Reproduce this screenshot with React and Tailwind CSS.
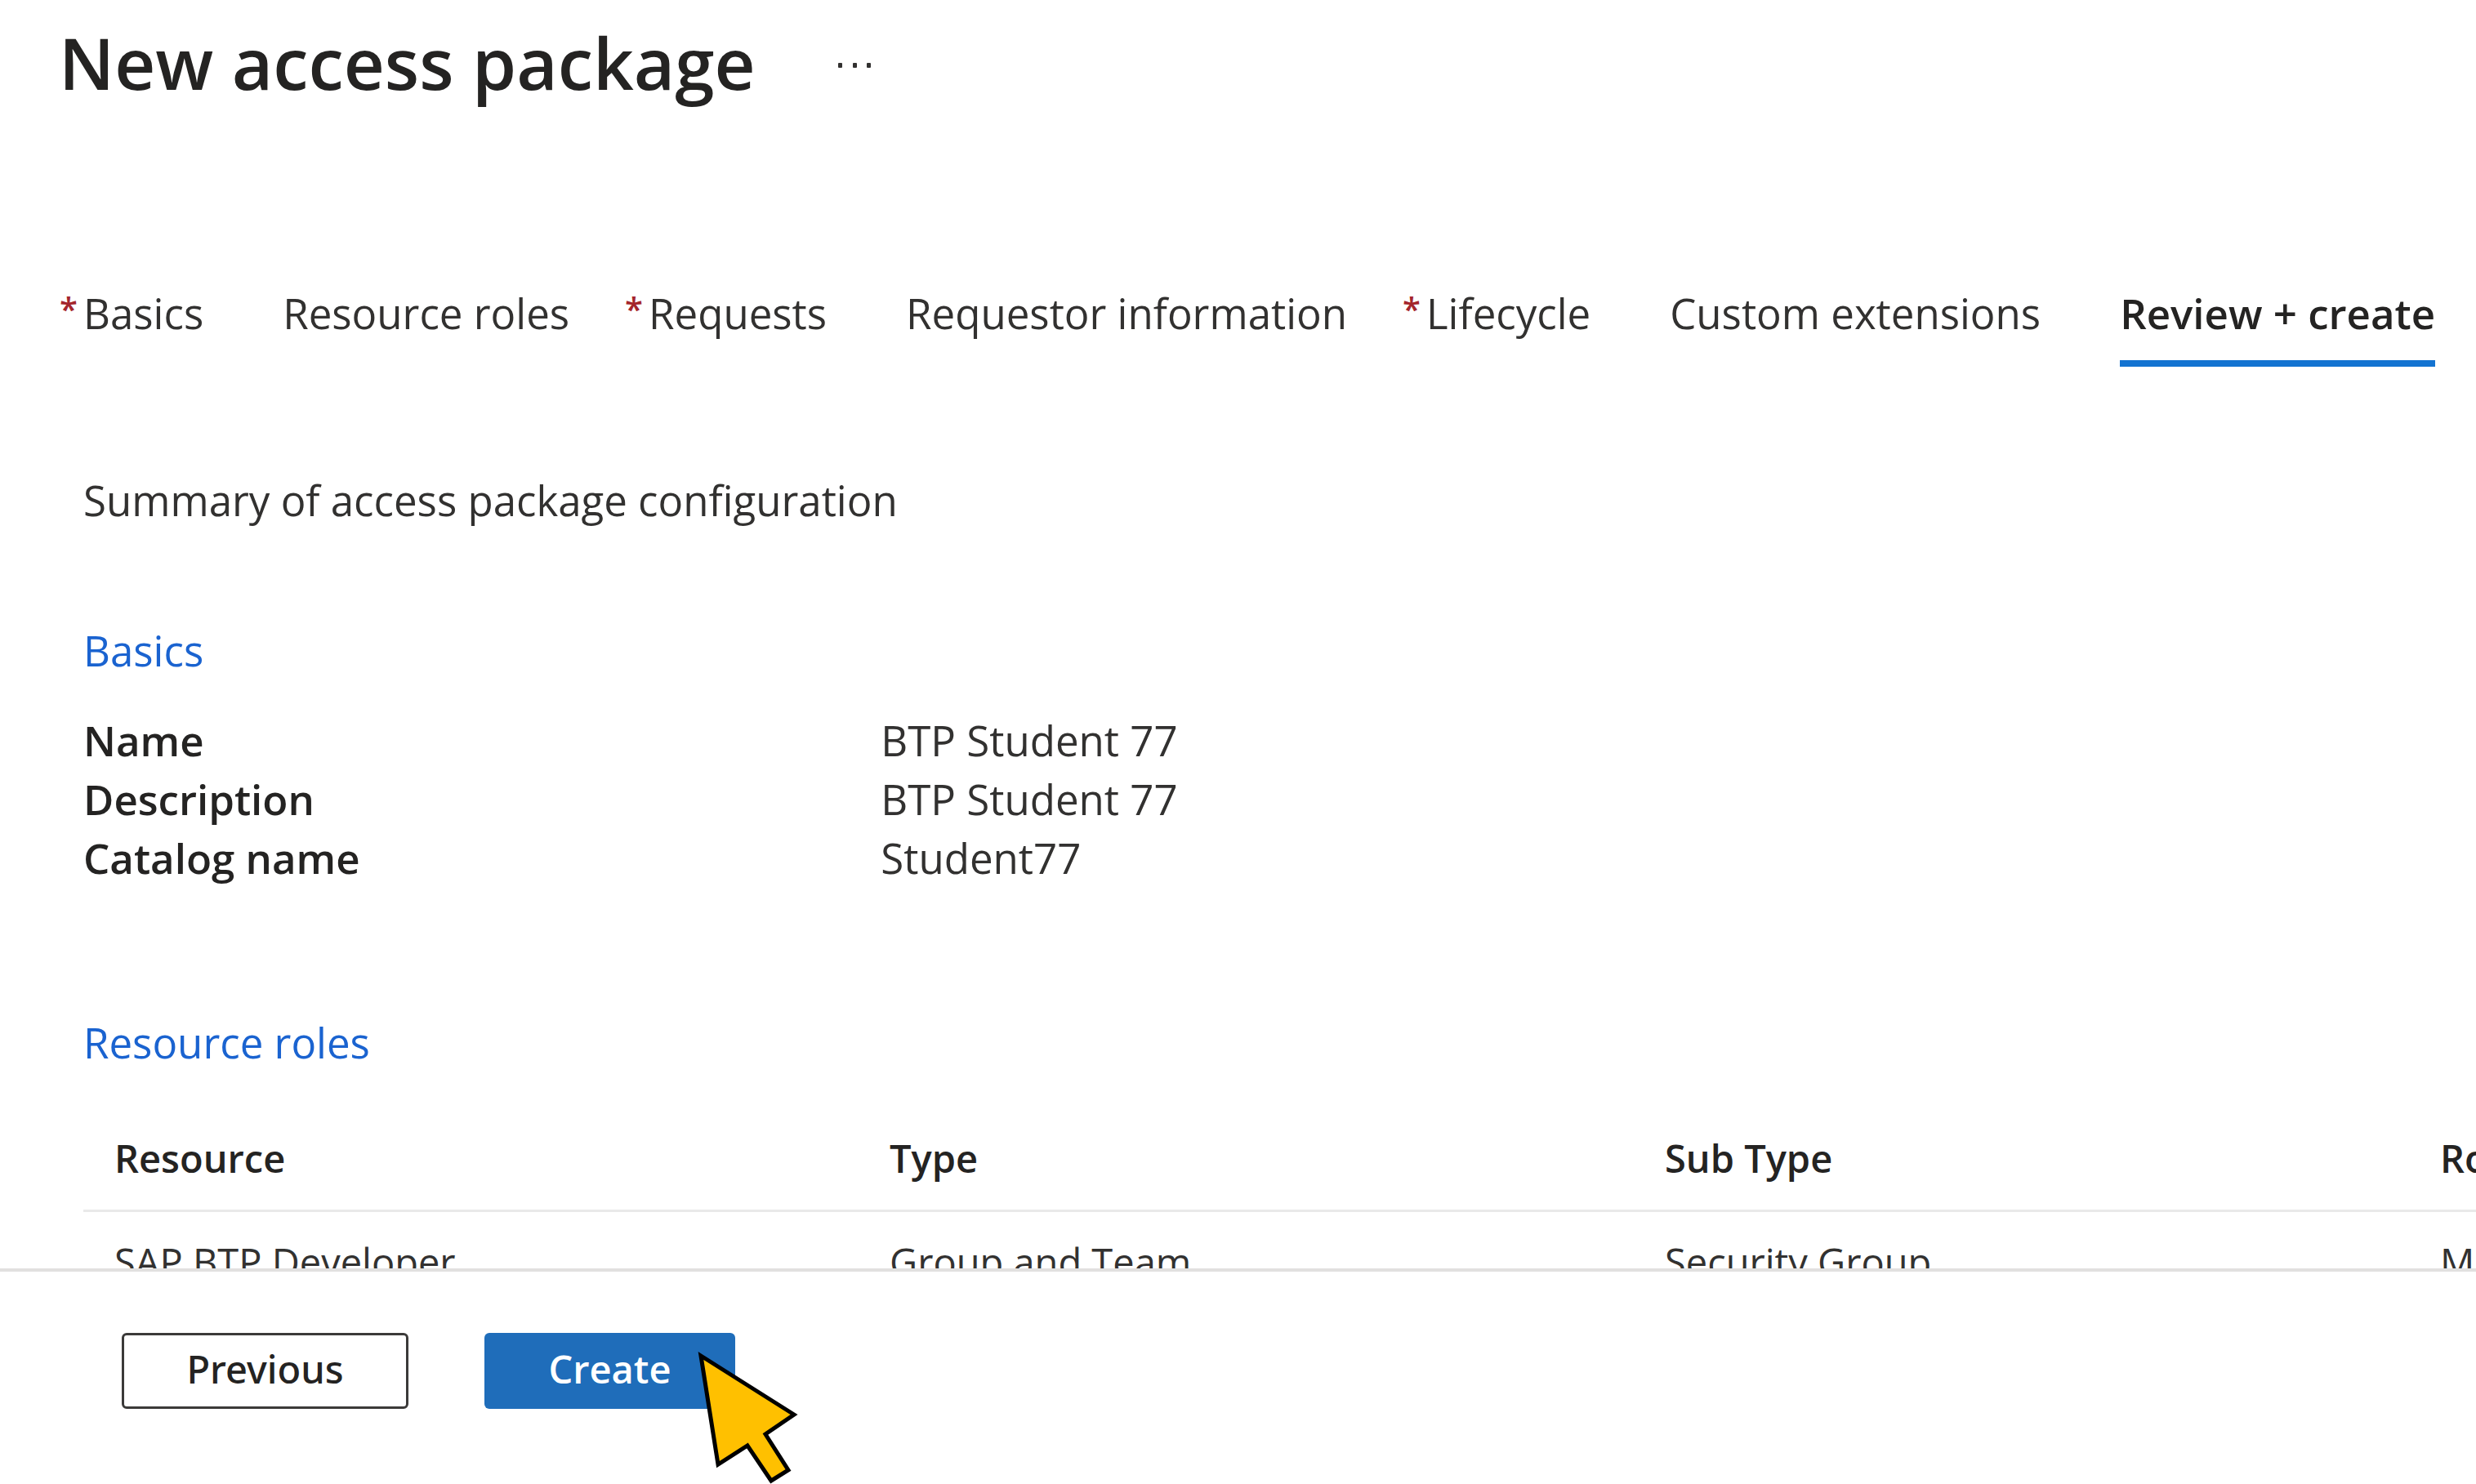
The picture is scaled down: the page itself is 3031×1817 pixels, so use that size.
const TABS = [
  { label: "Basics", required: true },
  { label: "Resource roles" },
  { label: "Requests", required: true },
  { label: "Requestor information" },
  { label: "Lifecycle", required: true },
  { label: "Custom extensions" },
  { label: "Review + create", active: true },
];

const BASICS = [
  ["Name", "BTP Student 77"],
  ["Description", "BTP Student 77"],
  ["Catalog name", "Student77"],
];

const COLUMNS = ["Resource", "Type", "Sub Type", "Role"];
const ROWS = [["SAP BTP Developer", "Group and Team", "Security Group", "Member"]];

function MoreIcon() {
  return (
    <svg width="44" height="8" viewBox="0 0 44 8" fill="#323130" aria-hidden="true">
      <rect x="1" y="1" width="5" height="6" rx="1" />
      <rect x="19" y="1" width="5" height="6" rx="1" />
      <rect x="36" y="1" width="5" height="6" rx="1" />
    </svg>
  );
}

function Pointer() {
  return (
    <svg
      className="pointer-events-none absolute top-[20px] left-[258px]"
      width="130"
      height="170"
      viewBox="0 0 130 170"
      aria-hidden="true"
    >
      <path
        d="M7 8 L121 80 L86 104 L114 148 L93 161 L64 118 L28 141 Z"
        fill="#ffc000"
        stroke="#000000"
        strokeWidth="5"
        strokeMiterlimit="10"
      />
    </svg>
  );
}

function Tab({ label, required, active }) {
  return (
    <button
      type="button"
      role="tab"
      aria-selected={Boolean(active)}
      className={
        active
          ? "flex shrink-0 items-start border-b-8 border-[#1373d1] pb-[22px] font-semibold text-[#242322]"
          : "flex shrink-0 items-start border-b-8 border-transparent pb-[22px]"
      }
    >
      {required && (
        <span className="-ml-[29px] w-[29px] text-left text-[40px] leading-[62px] font-semibold text-[#a4262c]">*</span>
      )}
      {label}
    </button>
  );
}

export default function App() {
  return (
    <div className="flex h-screen flex-col overflow-hidden bg-white font-['Open_Sans','Noto_Sans',sans-serif] text-[51px] leading-[72px] text-[#323130]">
      <main className="min-h-0 flex-1 overflow-hidden pt-[28px]">
        <header className="flex items-center gap-[100px] pl-[72px]">
          <h1 className="text-[87px] leading-[96px] font-semibold text-[#242322]">New access package</h1>
          <button type="button" aria-label="More options" className="pt-[8px]">
            <MoreIcon />
          </button>
        </header>

        <nav role="tablist" aria-label="Access package steps" className="mt-[223px] flex gap-[97px] pl-[102px] whitespace-nowrap">
          {TABS.map((tab) => (
            <Tab key={tab.label} {...tab} />
          ))}
        </nav>

        <div className="pl-[102px]">
          <p className="mt-[127px]">Summary of access package configuration</p>

          <section>
            <h2 className="mt-[112px] text-[#1a63d0]">Basics</h2>
            <dl className="mt-[38px]">
              {BASICS.map(([name, value]) => (
                <div key={name} className="grid grid-cols-[1fr_2fr]">
                  <dt className="font-semibold text-[#242322]">{name}</dt>
                  <dd>{value}</dd>
                </div>
              ))}
            </dl>
          </section>

          <section>
            <h2 className="mt-[154px] text-[#1a63d0]">Resource roles</h2>
            <div className="mt-[39px] overflow-hidden">
              <table className="w-max table-fixed border-collapse text-left text-[47px] whitespace-nowrap">
                <thead>
                  <tr className="border-b-3 border-[#e9e9e9]">
                    {COLUMNS.map((name) => (
                      <th key={name} scope="col" className="w-[949px] min-w-[949px] pt-[31px] pb-[27px] pl-[38px] font-semibold text-[#242322]">
                        {name}
                      </th>
                    ))}
                  </tr>
                </thead>
                <tbody>
                  {ROWS.map((row) => (
                    <tr key={row[0]}>
                      {row.map((cell) => (
                        <td key={cell} className="pt-[25px] pb-[29px] pl-[38px]">
                          {cell}
                        </td>
                      ))}
                    </tr>
                  ))}
                </tbody>
              </table>
            </div>
          </section>
        </div>
      </main>

      <footer className="flex shrink-0 gap-[93px] border-t-4 border-[#e1e0df] bg-white px-[149px] pt-[75px] pb-[92px] text-[47px]">
        <button
          type="button"
          className="flex h-[93px] w-[351px] items-center justify-center rounded-md border-3 border-[#3b3a39] pb-[6px] font-['Noto_Sans',sans-serif] font-medium text-[#242322]"
        >
          Previous
        </button>
        <div className="relative">
          <button
            type="button"
            className="flex h-[93px] w-[307px] items-center justify-center rounded-md bg-[#1f6dba] pb-[6px] font-semibold text-white"
          >
            Create
          </button>
          <Pointer />
        </div>
      </footer>
    </div>
  );
}
